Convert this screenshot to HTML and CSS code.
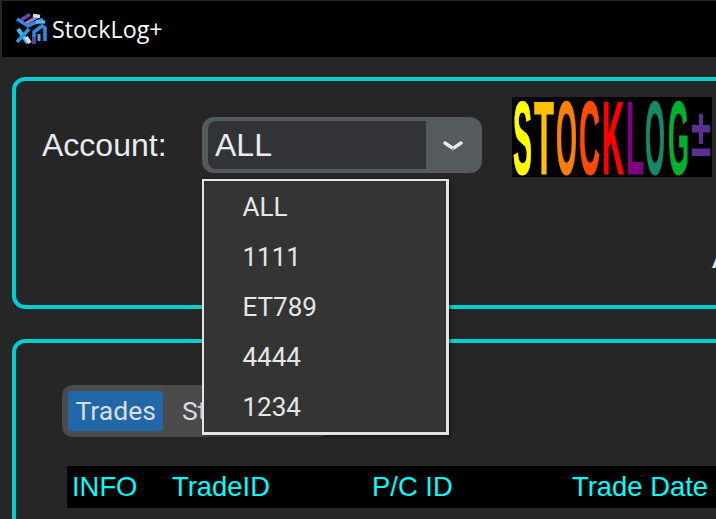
FILE: index.html
```html
<!DOCTYPE html>
<html lang="en">
<head>
<meta charset="utf-8">
<title>StockLog+</title>
<link rel="stylesheet" href="styles.css">
</head>
<body>
<header class="topbar">
  <svg class="app-icon" width="32" height="32" viewBox="0 0 32 32" aria-hidden="true">
    <g fill="none" stroke-width="3.4">
      <path d="M6 7 L15 1.5" stroke="#6a4aa8"/>
      <path d="M10 11 L22 4" stroke="#8f7cc8"/>
      <path d="M18 2.5 L25 3.5" stroke="#dcdce8"/>
      <path d="M2 6 L13 13 L28 6" stroke="#2f8ae0"/>
      <path d="M21 9 L30 9" stroke="#4cc0f0"/>
      <path d="M3 16 L13 30" stroke="#3abcf0" stroke-width="4"/>
      <path d="M14 16 L2 29" stroke="#2b9ae6"/>
      <path d="M11 24 L15 30" stroke="#d6d6e0" stroke-width="4"/>
      <path d="M19 30 L19 19 L27 13 L30 15 L30 28" stroke="#2e8ae0" stroke-width="3.6"/>
      <path d="M19 31 L19 24" stroke="#5f3ca8" stroke-width="3.6"/>
      <path d="M24 21 L24 28" stroke="#3fb4ec" stroke-width="3"/>
    </g>
  </svg>
  <span class="app-name">StockLog+</span>
</header>

<main class="content">
  <section class="panel panel-account">
    <div class="account-row">
      <label class="account-label">Account:</label>
      <div class="select">
        <div class="select-value">ALL</div>
        <div class="select-toggle">
          <svg width="20" height="12" viewBox="0 0 20 12" aria-hidden="true">
            <path d="M2 3 L10 8.5 L18 3" fill="none" stroke="#e8e8ea" stroke-width="3.4" stroke-linecap="round" stroke-linejoin="miter"/>
            <circle cx="10" cy="9.5" r="1.2" fill="#8a8f92"/>
          </svg>
        </div>
        <ul class="select-menu">
          <li>ALL</li>
          <li>1111</li>
          <li>ET789</li>
          <li>4444</li>
          <li>1234</li>
        </ul>
      </div>
      <svg class="brand" width="200" height="80" viewBox="0 0 200 80" role="img" aria-label="STOCKLOG+">
        <rect width="200" height="80" fill="#000"/>
        <g class="brand-text">
          <text x="1" y="77" textLength="19" lengthAdjust="spacingAndGlyphs" fill="#ffff00" stroke="#ffff00">S</text>
          <text x="22" y="77" textLength="20" lengthAdjust="spacingAndGlyphs" fill="#ffc000" stroke="#ffc000">T</text>
          <text x="44" y="77" textLength="21" lengthAdjust="spacingAndGlyphs" fill="#ff8000" stroke="#ff8000">O</text>
          <text x="67" y="77" textLength="21" lengthAdjust="spacingAndGlyphs" fill="#ff4a00" stroke="#ff4a00">C</text>
          <text x="90" y="77" textLength="22" lengthAdjust="spacingAndGlyphs" fill="#ff0000" stroke="#ff0000">K</text>
          <text x="114" y="77" textLength="18" lengthAdjust="spacingAndGlyphs" fill="#800080" stroke="#800080">L</text>
          <text x="133" y="77" textLength="20" lengthAdjust="spacingAndGlyphs" fill="#148a68" stroke="#148a68">O</text>
          <text x="156" y="77" textLength="21" lengthAdjust="spacingAndGlyphs" fill="#00b030" stroke="#00b030">G</text>
        </g>
        <text class="brand-plus" x="179" y="59" textLength="20" lengthAdjust="spacingAndGlyphs" fill="#5a3090">±</text>
      </svg>
    </div>
    <div class="second-row">A</div>
  </section>

  <section class="panel panel-trades">
    <nav class="tabs">
      <span class="tab tab-active">Trades</span>
      <span class="tab">Stats</span>
    </nav>
    <div class="table-head">
      <span>INFO</span>
      <span>TradeID</span>
      <span>P/C ID</span>
      <span>Trade Date</span>
    </div>
  </section>
</main>
</body>
</html>
```
FILE: styles.css
```css
* { box-sizing: border-box; }

html, body {
  margin: 0;
  height: 100%;
  overflow: hidden;
}

body {
  width: 716px;
  height: 519px;
  padding-top: 1px;
  background: #262626;
  font-family: "Liberation Sans", Arial, sans-serif;
  color: #e6ecf2;
}

.topbar {
  display: flex;
  align-items: center;
  height: 56px;
  margin-left: 2px;
  padding-left: 13px;
  background: #000;
}

.app-icon { flex: none; }

.app-name {
  margin-left: 5px;
  font-family: "Open Sans", sans-serif;
  font-size: 23.3px;
  color: #fff;
}

.content {
  padding: 20px 0 0 12px;
}

.panel {
  width: 1000px;
  border: 4px solid #00ced1;
  border-radius: 13px;
  background: #262626;
}

.panel-account {
  height: 232px;
  padding: 16px 0 0 26px;
}

.account-row {
  display: flex;
  align-items: flex-start;
}

.account-label {
  width: 160px;
  margin-top: 28px;
  font-size: 32px;
  line-height: 40px;
}

.select {
  position: relative;
  display: flex;
  width: 280px;
  height: 56px;
  margin-top: 20px;
  padding: 4px 0 4px 6px;
  border-radius: 12px;
  background: #555a5c;
}

.select-value {
  width: 218px;
  padding-left: 7px;
  border-radius: 8px 0 0 8px;
  background: #323336;
  font-size: 32px;
  line-height: 48px;
}

.select-toggle {
  display: flex;
  flex: 1;
  align-items: center;
  justify-content: center;
  padding: 2px 2px 0 0;
}

.select-menu {
  position: absolute;
  top: 62px;
  left: 0;
  z-index: 5;
  width: 247px;
  height: 256px;
  margin: 0;
  padding: 1px 0 0;
  list-style: none;
  border: solid #e4e4e4;
  border-width: 2px 3px 3px 2px;
  background: #343434;
  box-shadow: 1px 1px 3px rgba(0, 0, 0, 0.6);
  font-family: Roboto, sans-serif;
  font-size: 26px;
  color: #e6e6e6;
}

.select-menu li {
  height: 50px;
  padding-left: 38.5px;
  line-height: 50px;
}

.brand {
  flex: none;
  margin-left: 30px;
}

.brand-text text {
  font-family: "Liberation Sans Narrow", "Liberation Sans", sans-serif;
  font-size: 104px;
  font-weight: 700;
  stroke-width: 1;
}

.brand-plus {
  font-family: "Liberation Sans", sans-serif;
  font-size: 68px;
  font-weight: 700;
}

.second-row {
  margin: 60px 0 0 670px;
  font-size: 32px;
  line-height: 40px;
}

.panel-trades {
  height: 300px;
  margin-top: 30px;
  padding: 42px 0 0 46px;
}

.tabs {
  display: flex;
  align-items: center;
  width: 268px;
  height: 52px;
  padding: 0 6px;
  border-radius: 10px;
  background: #4b4b4b;
  font-family: Roboto, sans-serif;
  font-size: 26.5px;
  color: #dcdcdc;
}

.tab {
  height: 40px;
  padding: 0 8px;
  line-height: 40px;
  border-radius: 4px;
}

.tab-active {
  width: 95px;
  margin-right: 11px;
  padding-left: 7.5px;
  background: #2068a8;
}

.table-head {
  display: grid;
  grid-template-columns: 100px 200px 200px 300px;
  width: 940px;
  height: 42px;
  margin: 29px 0 0 5px;
  padding-left: 5px;
  background: #000;
  color: #00ffff;
  font-size: 27.4px;
  line-height: 42px;
}
```
